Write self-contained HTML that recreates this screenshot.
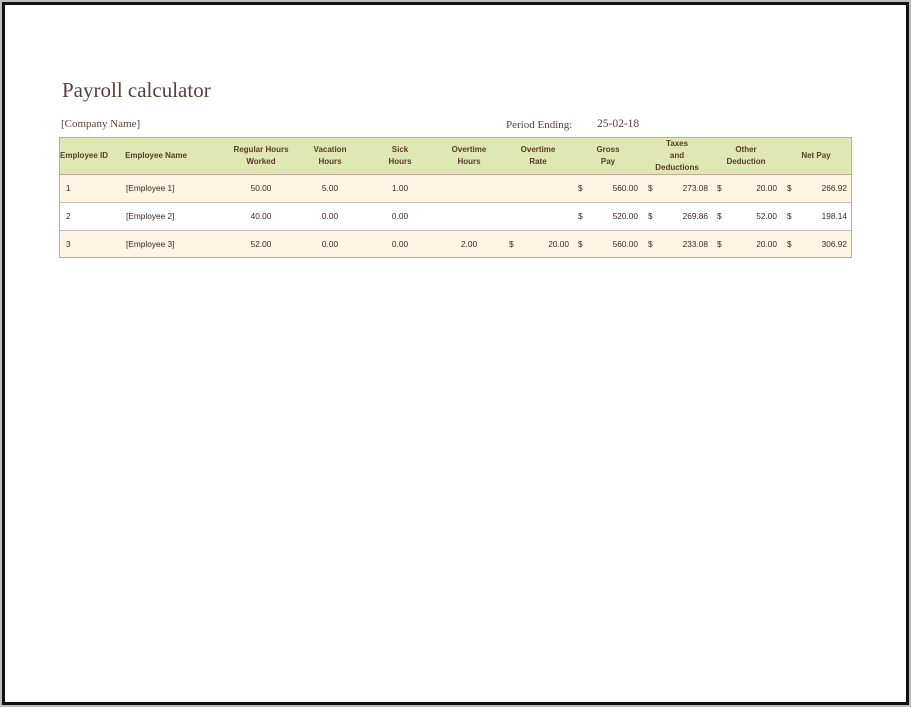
<!DOCTYPE html>
<html><head><meta charset="utf-8"><style>
body{margin:0;width:911px;height:707px;background:#fff;position:relative;overflow:hidden;font-family:"Liberation Sans",sans-serif;}
.frame{position:absolute;left:0;top:0;width:911px;height:707px;box-sizing:border-box;border:2px solid #bdbdbd;}
.frame2{position:absolute;left:2px;top:2px;right:2px;bottom:2px;border:3px solid #111;}
.t{position:absolute;white-space:nowrap;color:#5a3a30;}
.title{left:62px;top:78px;font-family:"Liberation Serif",serif;font-size:21px;color:#5b3f37;}
.ser{font-family:"Liberation Serif",serif;font-size:11px;color:#5b3f37;}
.tbl{position:absolute;left:59px;top:137px;width:791px;height:119px;border:1px solid #c4a79a;}
.row{position:absolute;left:0;width:791px;}
.s{position:absolute;font-size:8.3px;color:#3a2a20;white-space:nowrap;}
.h{position:absolute;font-size:8px;font-weight:bold;color:#5a3a2a;text-align:center;line-height:12px;white-space:nowrap;transform:translateX(-50%);}
.c{transform:translateX(-50%);}
.r{transform:translateX(-100%);}
</style></head><body>
<div class="frame"></div><div class="frame2"></div>
<div class="t title">Payroll calculator</div>
<div class="t ser" style="left:61px;top:118px">[Company Name]</div>
<div class="t ser" style="left:506px;top:119px">Period Ending:</div>
<div class="t ser" style="left:597px;top:118px;font-size:11.5px">25-02-18</div>
<div class="tbl">
<div class="row" style="top:0;height:36px;background:#dfe8b3;border-bottom:1px solid #c4a79a"></div>
<div class="row" style="top:37px;height:27px;background:#fdf5e2;border-bottom:1px solid #d2bdb2"></div>
<div class="row" style="top:65px;height:27px;background:#fff;border-bottom:1px solid #d2bdb2"></div>
<div class="row" style="top:93px;height:26px;background:#fdf5e2"></div>
</div>
<div style="position:absolute;left:0;top:0">
<div class="h" style="left:84px;top:150px">Employee ID</div>
<div class="h" style="left:156px;top:150px">Employee Name</div>
<div class="h" style="left:261px;top:144px">Regular Hours<br>Worked</div>
<div class="h" style="left:330px;top:144px">Vacation<br>Hours</div>
<div class="h" style="left:400px;top:144px">Sick<br>Hours</div>
<div class="h" style="left:469px;top:144px">Overtime<br>Hours</div>
<div class="h" style="left:538px;top:144px">Overtime<br>Rate</div>
<div class="h" style="left:608px;top:144px">Gross<br>Pay</div>
<div class="h" style="left:677px;top:138px">Taxes<br>and<br>Deductions</div>
<div class="h" style="left:746px;top:144px">Other<br>Deduction</div>
<div class="h" style="left:816px;top:150px">Net Pay</div>
</div>
<div class="s" style="left:66px;top:183px">1</div><div class="s" style="left:126px;top:183px">[Employee 1]</div>
<div class="s c" style="left:261px;top:183px">50.00</div><div class="s c" style="left:330px;top:183px">5.00</div><div class="s c" style="left:400px;top:183px">1.00</div>
<div class="s" style="left:578px;top:183px">$</div><div class="s r" style="left:638px;top:183px">560.00</div>
<div class="s" style="left:648px;top:183px">$</div><div class="s r" style="left:708px;top:183px">273.08</div>
<div class="s" style="left:717px;top:183px">$</div><div class="s r" style="left:777px;top:183px">20.00</div>
<div class="s" style="left:787px;top:183px">$</div><div class="s r" style="left:847px;top:183px">266.92</div>

<div class="s" style="left:66px;top:211px">2</div><div class="s" style="left:126px;top:211px">[Employee 2]</div>
<div class="s c" style="left:261px;top:211px">40.00</div><div class="s c" style="left:330px;top:211px">0.00</div><div class="s c" style="left:400px;top:211px">0.00</div>
<div class="s" style="left:578px;top:211px">$</div><div class="s r" style="left:638px;top:211px">520.00</div>
<div class="s" style="left:648px;top:211px">$</div><div class="s r" style="left:708px;top:211px">269.86</div>
<div class="s" style="left:717px;top:211px">$</div><div class="s r" style="left:777px;top:211px">52.00</div>
<div class="s" style="left:787px;top:211px">$</div><div class="s r" style="left:847px;top:211px">198.14</div>

<div class="s" style="left:66px;top:239px">3</div><div class="s" style="left:126px;top:239px">[Employee 3]</div>
<div class="s c" style="left:261px;top:239px">52.00</div><div class="s c" style="left:330px;top:239px">0.00</div><div class="s c" style="left:400px;top:239px">0.00</div>
<div class="s c" style="left:469px;top:239px">2.00</div>
<div class="s" style="left:509px;top:239px">$</div><div class="s r" style="left:569px;top:239px">20.00</div>
<div class="s" style="left:578px;top:239px">$</div><div class="s r" style="left:638px;top:239px">560.00</div>
<div class="s" style="left:648px;top:239px">$</div><div class="s r" style="left:708px;top:239px">233.08</div>
<div class="s" style="left:717px;top:239px">$</div><div class="s r" style="left:777px;top:239px">20.00</div>
<div class="s" style="left:787px;top:239px">$</div><div class="s r" style="left:847px;top:239px">306.92</div>
</body></html>
